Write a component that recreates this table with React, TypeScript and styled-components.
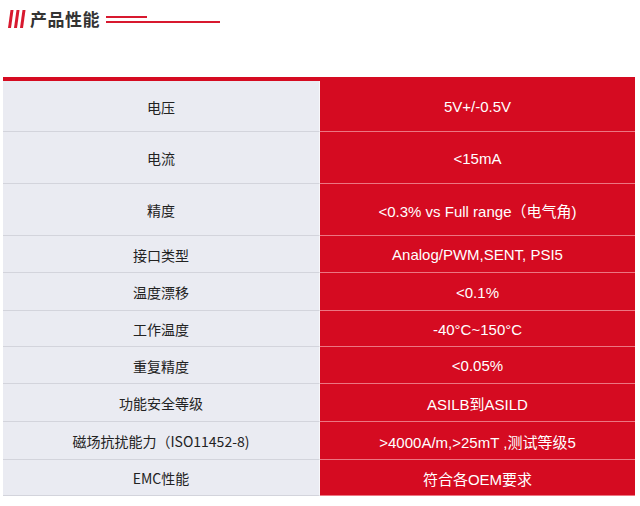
import * as React from 'react';
import styled, { createGlobalStyle } from 'styled-components';

const GlobalStyle = createGlobalStyle`
  html, body {
    margin: 0;
    padding: 0;
    background: #ffffff;
  }
  body {
    font-family: 'Noto Sans CJK SC', 'Liberation Sans', sans-serif;
  }
`;

const Page = styled.div`
  width: 640px;
  height: 506px;
  overflow: hidden;
  background: #ffffff;
`;

const Header = styled.div`
  display: flex;
  align-items: center;
  height: 22px;
  padding: 8px 0 0 8px;
`;

const Bars = styled.svg`
  width: 18px;
  height: 18px;
  margin-right: 4px;
  flex-shrink: 0;
`;

const Title = styled.h2`
  margin: 0;
  font-family: 'Noto Sans CJK SC', sans-serif;
  font-size: 17px;
  font-weight: 700;
  color: #333333;
  letter-spacing: 0.5px;
  line-height: 22px;
`;

const Rule = styled.div`
  display: flex;
  flex-direction: column;
  gap: 3px;
  margin-left: 6px;
  margin-top: 1px;
`;

const RuleLine = styled.div<{ $w: number }>`
  width: ${(p) => p.$w}px;
  height: 2px;
  background: #d8192f;
`;

const Table = styled.div`
  margin: 47px 5px 0 3px;
  border-top: 4px solid #d50b21;
  display: grid;
  grid-template-columns: 317px 1fr;
`;

const Label = styled.div<{ $h: number }>`
  height: ${(p) => p.$h - 1}px;
  display: flex;
  align-items: center;
  justify-content: center;
  padding-top: 1px;
  box-sizing: border-box;
  background: #eaebf2;
  border-bottom: 1px solid #d3d4dc;
  border-right: 1px solid #f7f7fa;
  font-family: 'Noto Sans CJK SC', sans-serif;
  font-size: 14px;
  color: #222222;
`;

const Value = styled.div<{ $h: number }>`
  height: ${(p) => p.$h - 1}px;
  display: flex;
  align-items: center;
  justify-content: center;
  padding-top: 1px;
  box-sizing: border-box;
  background: #d50b21;
  border-bottom: 1px solid #ec7682;
  font-family: 'Liberation Sans', 'Noto Sans CJK SC', sans-serif;
  font-size: 15px;
  color: #ffffff;
`;

const rows: [string, string, number][] = [
  ['电压', '5V+/-0.5V', 52],
  ['电流', '<15mA', 53],
  ['精度', '<0.3% vs Full range（电气角)', 53],
  ['接口类型', 'Analog/PWM,SENT, PSI5', 38],
  ['温度漂移', '<0.1%', 39],
  ['工作温度', '-40°C~150°C', 37],
  ['重复精度', '<0.05%', 38],
  ['功能安全等级', 'ASILB到ASILD', 39],
  ['磁场抗扰能力（ISO11452-8)', '>4000A/m,>25mT ,测试等级5', 39],
  ['EMC性能', '符合各OEM要求', 37],
];

const App: React.FC = () => (
  <Page>
    <GlobalStyle />
    <Header>
      <Bars viewBox="0 0 18 18">
        <polygon points="2.5,0 5.5,0 3,18 0,18" fill="#d8192f" />
        <polygon points="8.5,0 11.5,0 9,18 6,18" fill="#d8192f" />
        <polygon points="14.5,0 17.5,0 15,18 12,18" fill="#d8192f" />
      </Bars>
      <Title>产品性能</Title>
      <Rule>
        <RuleLine $w={41} />
        <RuleLine $w={114} />
      </Rule>
    </Header>
    <Table>
      {rows.map(([label, value, h]) => (
        <React.Fragment key={label}>
          <Label $h={h}>{label}</Label>
          <Value $h={h}>{value}</Value>
        </React.Fragment>
      ))}
    </Table>
  </Page>
);

export default App;
